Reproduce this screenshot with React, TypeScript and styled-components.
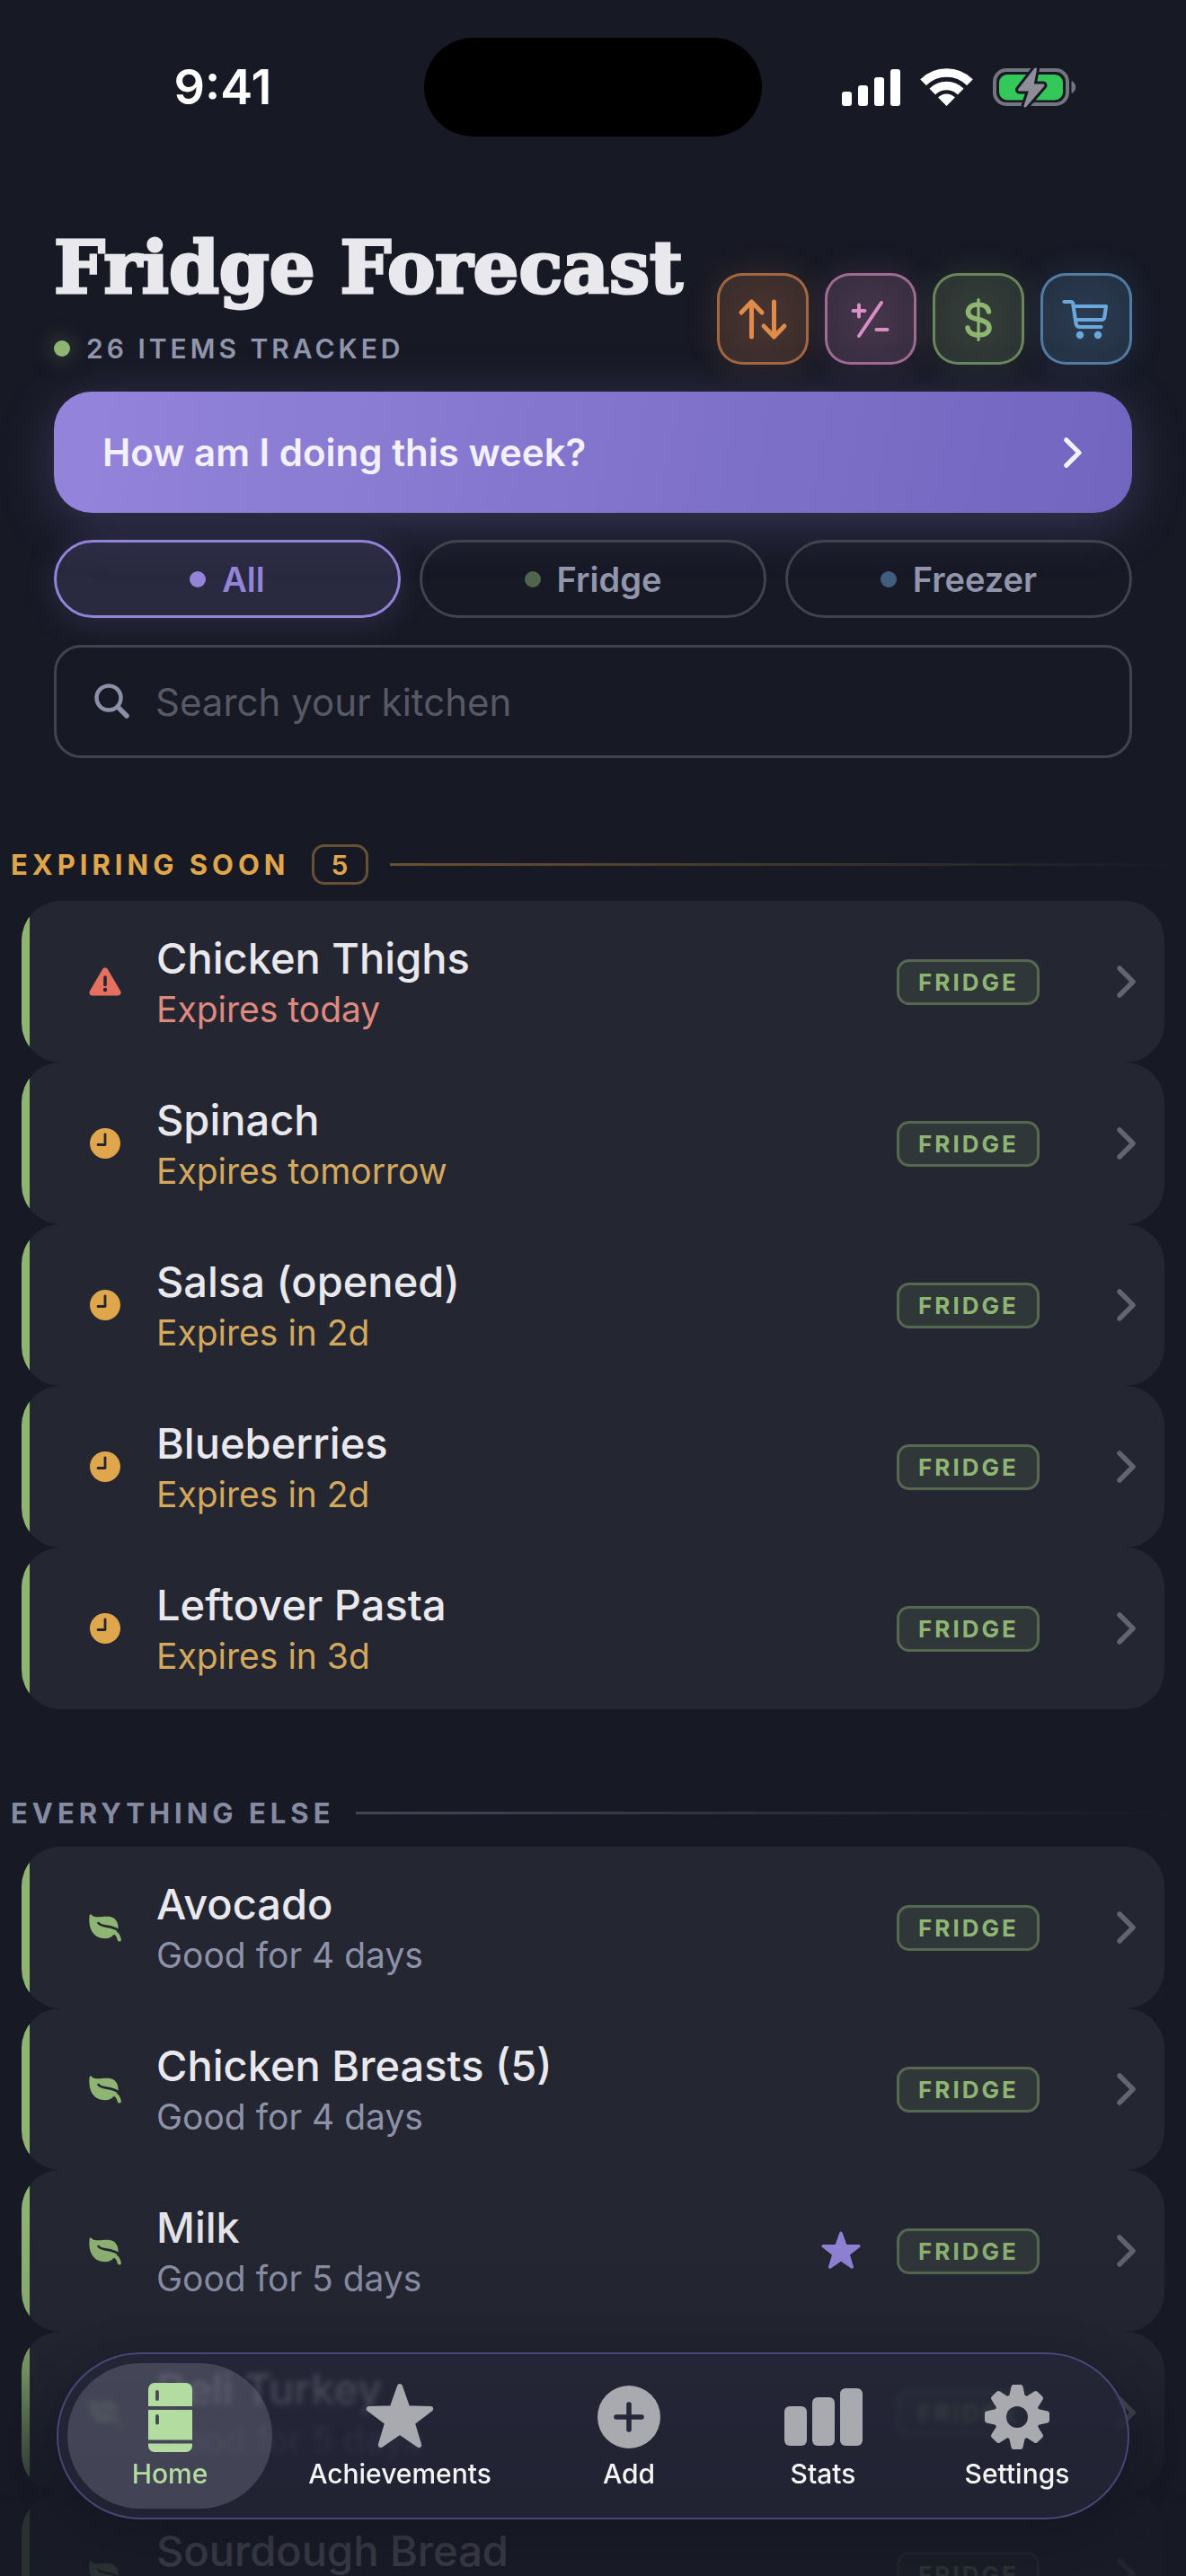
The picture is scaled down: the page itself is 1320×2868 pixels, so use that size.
import React from "react";
import styled, { createGlobalStyle } from "styled-components";

const color = {
  bg: "#171925",
  card: "#242632",
  text: "#e9e8ed",
  muted: "#9196ac",
  green: "#8fb573",
  amber: "#e0a64b",
  red: "#e5705f",
  violet: "#9384da",
};

const GlobalStyle = createGlobalStyle`
  * { box-sizing: border-box; }
  body { margin: 0; background: ${color.bg}; }
  button, input { font: inherit; color: inherit; }
  button { cursor: pointer; padding: 0; border: 0; background: none; }
  h1, h2, p, ul { margin: 0; padding: 0; }
  ul { list-style: none; }
  svg { display: block; flex: none; overflow: visible; }
`;

const Screen = styled.div`
  position: relative;
  height: 100vh;
  overflow: hidden;
  background: ${color.bg};
  color: ${color.text};
  font-family: Inter, "Liberation Sans", sans-serif;
`;

const Scroller = styled.main`
  height: 100%;
  overflow-y: auto;
  scrollbar-width: none;
`;

const StatusBar = styled.div`
  display: grid;
  grid-template-columns: 1fr 376px 1fr;
  align-items: center;
  justify-items: center;
  height: 110px;
  margin-top: 42px;
  color: #fff;
`;

const Clock = styled.time`
  font-size: 54px;
  line-height: 64px;
  font-weight: 600;
  padding-left: 24px;
`;

const Island = styled.div`
  width: 100%;
  height: 100%;
  border-radius: 55px;
  background: #000;
`;

const StatusIcons = styled.div`
  display: flex;
  align-items: center;
  gap: 23px;
  padding-right: 34px;
`;

const Top = styled.div`
  display: flex;
  flex-direction: column;
  gap: 30px;
  padding: 98px 60px 0;
`;

const Header = styled.header`
  display: flex;
  align-items: flex-end;
  justify-content: space-between;
`;

const Title = styled.h1`
  font-family: "DejaVu Serif", serif;
  font-size: 80px;
  line-height: 96px;
  font-weight: 700;
  white-space: nowrap;
  -webkit-text-stroke: 3px ${color.text};
`;

const Tracked = styled.p`
  display: flex;
  align-items: center;
  gap: 18px;
  margin-top: 24px;
  font-size: 30px;
  line-height: 36px;
  font-weight: 600;
  letter-spacing: 4px;
  color: ${color.muted};
`;

const Dot = styled.span<{ $color: string; $glow?: boolean }>`
  width: 18px;
  height: 18px;
  border-radius: 50%;
  background: ${(p) => p.$color};
  box-shadow: ${(p) => (p.$glow ? `0 0 24px ${p.$color}80` : "none")};
`;

const Actions = styled.div`
  display: flex;
  gap: 18px;
`;

const ActionButton = styled.button<{ $color: string }>`
  display: grid;
  place-items: center;
  width: 102px;
  height: 102px;
  border: 3px solid ${(p) => p.$color}a0;
  border-radius: 28px;
  color: ${(p) => p.$color};
  background: radial-gradient(circle, ${(p) => p.$color}40, ${(p) => p.$color}30 70%);
  box-shadow: 0 0 36px ${(p) => p.$color}26;
`;

const Banner = styled.button`
  display: flex;
  align-items: center;
  justify-content: space-between;
  height: 135px;
  padding: 0 56px 0 54px;
  border-radius: 42px;
  background: linear-gradient(100deg, #9484db, #7165bf);
  box-shadow: 0 12px 60px #9384da45;
  color: #f4f1ff;
  font-size: 42px;
  font-weight: 600;
`;

const Chips = styled.div`
  display: grid;
  grid-template-columns: repeat(3, 1fr);
  gap: 21px;
`;

const Chip = styled.button<{ $active?: boolean }>`
  display: flex;
  align-items: center;
  justify-content: center;
  gap: 18px;
  height: 87px;
  border: 3px solid ${(p) => (p.$active ? color.violet : "#42434f")};
  border-radius: 44px;
  background: ${(p) => (p.$active ? "#9384da26" : "transparent")};
  box-shadow: ${(p) => (p.$active ? "0 6px 36px #9384da2e" : "none")};
  color: ${(p) => (p.$active ? color.violet : color.muted)};
  font-size: 38px;
  font-weight: 600;
`;

const SearchBox = styled.label`
  display: flex;
  align-items: center;
  gap: 28px;
  height: 126px;
  padding: 0 42px;
  border: 3px solid #42434f;
  border-radius: 30px;
  color: ${color.muted};
`;

const SearchInput = styled.input`
  flex: 1;
  min-width: 0;
  padding: 0;
  border: 0;
  outline: 0;
  background: transparent;
  font-size: 42px;
  &::placeholder { color: #575965; opacity: 1; }
`;

const Section = styled.section`
  margin-top: 96px;
`;

const SectionHead = styled.div<{ $color: string; $line: string }>`
  display: flex;
  align-items: center;
  gap: 24px;
  padding: 0 12px;
  margin-bottom: 18px;
  color: ${(p) => p.$color};
  &::after {
    content: "";
    flex: 1;
    height: 3px;
    background: linear-gradient(90deg, ${(p) => p.$line}, transparent);
  }
`;

const SectionTitle = styled.h2`
  font-size: 31px;
  line-height: 39px;
  font-weight: 700;
  letter-spacing: 5px;
`;

const Count = styled.span`
  display: grid;
  place-items: center;
  width: 63px;
  height: 45px;
  border: 3px solid #e0a64b66;
  border-radius: 14px;
  font-size: 30px;
  font-weight: 600;
`;

const List = styled.ul`
  padding: 0 24px;
`;

const Row = styled.li`
  display: flex;
  align-items: center;
  height: 180px;
  padding: 0 31px 0 66px;
  border-radius: 44px;
  background: linear-gradient(90deg, ${color.green} 9px, ${color.card} 9px);
`;

const RowIcon = styled.span`
  display: grid;
  place-items: center;
  width: 54px;
`;

const RowText = styled.div`
  flex: 1;
  min-width: 0;
  padding-left: 30px;
`;

const Name = styled.p`
  font-size: 47px;
  line-height: 58px;
  font-weight: 500;
`;

const Detail = styled.p<{ $color: string }>`
  font-size: 39px;
  line-height: 48px;
  margin-top: 4px;
  color: ${(p) => p.$color};
`;

const Tag = styled.span`
  display: grid;
  place-items: center;
  width: 159px;
  height: 51px;
  margin: 0 86px 0 40px;
  border: 3px solid #8fb57366;
  border-radius: 14px;
  background: #8fb5731f;
  color: ${color.green};
  font-size: 26px;
  font-weight: 700;
  letter-spacing: 3px;
`;

const Fade = styled.div`
  position: absolute;
  inset: auto 0 0;
  height: 430px;
  pointer-events: none;
  background: linear-gradient(
    #16182400,
    #16182414 30%,
    #16182438 45%,
    #16182490 63%,
    #161824d8 80%,
    #171925d8
  );
`;

const TabBar = styled.nav`
  position: absolute;
  inset: auto 63px 63px;
  display: grid;
  grid-template-columns: 228fr 284fr 226fr 206fr 226fr;
  height: 186px;
  padding: 10px;
  border: 2px solid #454874;
  border-radius: 93px;
  background: #262739b8;
  backdrop-filter: blur(3px);
  box-shadow: 0 12px 48px #10121c66;
`;

const Tab = styled.button<{ $active?: boolean }>`
  display: flex;
  flex-direction: column;
  align-items: center;
  border-radius: 81px;
  padding-top: 21px;
  color: ${(p) => (p.$active ? "#b3dca0" : "#f4f4f5")};
  background: ${(p) => (p.$active ? "#85889a55" : "none")};
  font-size: 30px;
  line-height: 36px;
  font-weight: 500;
`;

const TabIcon = styled.span`
  display: grid;
  place-items: center;
  height: 78px;
  margin-bottom: 6px;
`;

const Chevron = ({ stroke, size = 36 }: { stroke: string; size?: number }) => (
  <svg width={size * 0.6} height={size} viewBox="0 0 21.6 36" fill="none" stroke={stroke} strokeWidth="5.5" strokeLinecap="round" strokeLinejoin="round">
    <path d="M3 3 L18 18 L3 33" />
  </svg>
);

const Signal = () => (
  <svg width="65" height="41" fill="#fff">
    <rect x="0" y="25" width="11" height="16" rx="3" />
    <rect x="18" y="18" width="11" height="23" rx="3" />
    <rect x="36" y="9" width="11" height="32" rx="3" />
    <rect x="54" y="0" width="11" height="41" rx="3" />
  </svg>
);

const Wifi = () => (
  <svg width="57" height="42" viewBox="0 0 57 42" fill="none" stroke="#fff" strokeWidth="9.5">
    <clipPath id="wedge"><path d="M28.5 42 L-13 0 H70 Z" /></clipPath>
    <g clipPath="url(#wedge)">
      <circle cx="28.5" cy="41.5" r="36.5" />
      <circle cx="28.5" cy="41.5" r="22" />
      <circle cx="28.5" cy="41.5" r="6.5" strokeWidth="13" />
    </g>
  </svg>
);

const bolt = "M47.5 2 L29.5 25 H42 L36 43 L56 20 H44 Z";
const Battery = () => (
  <svg width="93" height="44" viewBox="0 0 93 44">
    <rect x="2" y="3" width="81" height="38" rx="13" fill="none" stroke="#74757f" strokeWidth="4" />
    <path d="M88 15.5 a7.5 7.5 0 0 1 0 13 Z" fill="#74757f" stroke="#74757f" />
    <rect x="7" y="8" width="71" height="28.5" rx="9" fill="#34c759" />
    <path d={bolt} fill={color.bg} stroke={color.bg} strokeWidth="9" strokeLinejoin="round" />
    <path d={bolt} fill="#8d8e97" stroke="#8d8e97" strokeWidth="3" strokeLinejoin="round" />
  </svg>
);

const ActionIcon = ({ width, children }: { width: number; children: React.ReactNode }) => (
  <svg width="60" height="60" viewBox="-30 -30 60 60" fill="none" stroke="currentColor" strokeWidth={width} strokeLinecap="round" strokeLinejoin="round">
    {children}
  </svg>
);

const SortIcon = () => (
  <ActionIcon width={5}>
    <path d="M-12.5 20 V-19 M-24 -7 L-12.5 -19 L-1 -7 M12.5 -19 V20 M1 8 L12.5 20 L24 8" />
  </ActionIcon>
);
const PlusMinusIcon = () => (
  <ActionIcon width={4}>
    <path d="M12 -18 L-13 19 M-19.5 -9 H-6.5 M-13 -15.5 V-2.5 M6.5 12 H18.5" />
  </ActionIcon>
);
const DollarIcon = () => (
  <ActionIcon width={5.5}>
    <path d="M11.5 -8 C10.5 -13 6 -16 0 -16 C-7 -16 -11.5 -13 -11.5 -7.5 C-11.5 -2 -6 -0.5 0 0.8 C7 2.3 12 4.5 12 10 C12 15.5 7 18 0 18 C-7 18 -11.5 14.5 -12 10" />
    <path d="M0 -21.5 V23.5" strokeWidth="3.2" />
  </ActionIcon>
);
const CartIcon = () => (
  <ActionIcon width={4.2}>
    <path d="M-24.5 -19 H-17 C-15.5 -19 -15 -18 -14.8 -17 L-11.5 5 C-11 8 -10 9 -7.5 9 H16.5 M-14 -14 H22 L20.3 -2 C20 0 19 1 17 1 H-12" />
    <g fill="currentColor" stroke="none">
      <circle cx="-7" cy="18" r="4.2" />
      <circle cx="13" cy="18" r="4.2" />
    </g>
  </ActionIcon>
);

const SearchIcon = () => (
  <svg width="40" height="40" viewBox="0 0 40 40" fill="none" stroke="#8b90a6" strokeLinecap="round">
    <circle cx="16" cy="16" r="13.5" strokeWidth="4.5" />
    <path d="M26.5 26.5 L36 36" strokeWidth="5.5" />
  </svg>
);

const AlertIcon = () => (
  <svg width="36" height="32" viewBox="0 0 36 32">
    <path d="M18 4 L32 28 H4 Z" fill={color.red} stroke={color.red} strokeWidth="7" strokeLinejoin="round" />
    <path d="M18 11 V19.5" stroke={color.card} strokeWidth="3.6" strokeLinecap="round" />
    <circle cx="18" cy="25" r="2.2" fill={color.card} />
  </svg>
);

const ClockIcon = () => (
  <svg width="34" height="34" viewBox="-17 -17 34 34">
    <circle r="17" fill={color.amber} />
    <path d="M0 -10 V1.5 H-8" fill="none" stroke={color.card} strokeWidth="2.8" strokeLinecap="round" strokeLinejoin="round" />
  </svg>
);

const LeafIcon = () => (
  <svg width="36" height="31" viewBox="0 0 36 31" fill="none" strokeLinecap="round">
    <path d="M2 0.3 C0.8 0 0.5 1.5 0.4 4 C-0.4 18 6 27.2 18 27.2 C22 27.2 25 26 27.5 23 L32.5 18 C33.5 9 29 3.2 22 2.8 C14 2.4 8 5 3.4 1.4 C3 1 2.5 0.4 2 0.3 Z" fill={color.green} />
    <path d="M24 19.5 C30 20 33 24 33.8 28.5" stroke={color.green} strokeWidth="4.2" />
    <path d="M10.5 10 C15 15.5 24 11.5 33 18.5" stroke={color.card} strokeWidth="2.6" />
  </svg>
);

const starPoints = (outer: number, inner: number) =>
  Array.from({ length: 10 }, (_, i) => {
    const r = i % 2 ? inner : outer;
    const a = (i * Math.PI) / 5 - Math.PI / 2;
    return `${r * Math.cos(a)},${r * Math.sin(a)}`;
  }).join(" ");

const Star = ({ size, fill }: { size: number; fill: string }) => (
  <svg width={size} height={size} viewBox="-38 -38 76 76">
    <polygon points={starPoints(36, 14.5)} fill={fill} stroke={fill} strokeWidth="6" strokeLinejoin="round" transform="translate(0 2)" />
  </svg>
);

const iconGray = "#a9aab0";

const FridgeIcon = () => (
  <svg width="49" height="77" viewBox="0 0 49 77">
    <mask id="fridge">
      <rect width="49" height="77" rx="7" fill="#fff" />
      <path d="M0 28 H49 M0 65.5 H49" stroke="#000" strokeWidth="4" />
      <path d="M10 10 V18 M10 37 V44.5" stroke="#000" strokeWidth="3.8" strokeLinecap="round" />
    </mask>
    <rect width="49" height="77" fill="#b3dca0" mask="url(#fridge)" />
  </svg>
);

const AddIcon = () => (
  <svg width="70" height="70" viewBox="-35 -35 70 70">
    <circle r="35" fill={iconGray} />
    <path d="M-14 0 H14 M0 -14 V14" stroke="#26273a" strokeWidth="5.6" strokeLinecap="round" />
  </svg>
);

const StatsIcon = () => (
  <svg width="87" height="64" fill={iconGray}>
    <rect x="0" y="20" width="25" height="44" rx="6" />
    <rect x="31" y="10" width="25" height="54" rx="6" />
    <rect x="62" y="0" width="25" height="64" rx="6" />
  </svg>
);

const GearIcon = () => (
  <svg width="72" height="72" viewBox="-36 -36 72 72">
    <mask id="gear">
      <g fill="#fff" stroke="#fff" strokeWidth="5" strokeLinejoin="round">
        <circle r="23" />
        {Array.from({ length: 8 }, (_, i) => (
          <path key={i} d="M-7 -20 L-4 -33.5 H4 L7 -20 Z" transform={`rotate(${i * 45})`} />
        ))}
      </g>
      <circle r="12" fill="#000" />
    </mask>
    <rect x="-36" y="-36" width="72" height="72" fill={iconGray} mask="url(#gear)" />
  </svg>
);

type Status = "today" | "soon" | "good";
type Item = { name: string; detail: string; status: Status; starred?: boolean };

const statusColor: Record<Status, string> = { today: "#e08a7e", soon: "#d4a95c", good: "#8d92a8" };
const statusIcon: Record<Status, React.ReactNode> = {
  today: <AlertIcon />,
  soon: <ClockIcon />,
  good: <LeafIcon />,
};

const expiring: Item[] = [
  { name: "Chicken Thighs", detail: "Expires today", status: "today" },
  { name: "Spinach", detail: "Expires tomorrow", status: "soon" },
  { name: "Salsa (opened)", detail: "Expires in 2d", status: "soon" },
  { name: "Blueberries", detail: "Expires in 2d", status: "soon" },
  { name: "Leftover Pasta", detail: "Expires in 3d", status: "soon" },
];

const others: Item[] = [
  { name: "Avocado", detail: "Good for 4 days", status: "good" },
  { name: "Chicken Breasts (5)", detail: "Good for 4 days", status: "good" },
  { name: "Milk", detail: "Good for 5 days", status: "good", starred: true },
  { name: "Deli Turkey", detail: "Good for 5 days", status: "good" },
  { name: "Sourdough Bread", detail: "Good for 5 days", status: "good" },
];

const ItemList = ({ items }: { items: Item[] }) => (
  <List>
    {items.map((item) => (
      <Row key={item.name}>
        <RowIcon>{statusIcon[item.status]}</RowIcon>
        <RowText>
          <Name>{item.name}</Name>
          <Detail $color={statusColor[item.status]}>{item.detail}</Detail>
        </RowText>
        {item.starred && <Star size={44} fill={color.violet} />}
        <Tag>FRIDGE</Tag>
        <Chevron stroke="#636470" />
      </Row>
    ))}
  </List>
);

const tabs = [
  { label: "Home", icon: <FridgeIcon /> },
  { label: "Achievements", icon: <Star size={76} fill={iconGray} /> },
  { label: "Add", icon: <AddIcon /> },
  { label: "Stats", icon: <StatsIcon /> },
  { label: "Settings", icon: <GearIcon /> },
];

export default function App() {
  return (
    <Screen>
      <GlobalStyle />
      <Scroller>
        <StatusBar>
          <Clock>9:41</Clock>
          <Island />
          <StatusIcons>
            <Signal />
            <Wifi />
            <Battery />
          </StatusIcons>
        </StatusBar>

        <Top>
          <Header>
            <div>
              <Title>Fridge Forecast</Title>
              <Tracked>
                <Dot $color={color.green} $glow />
                26 ITEMS TRACKED
              </Tracked>
            </div>
            <Actions>
              <ActionButton $color="#e08a4c" aria-label="Sort"><SortIcon /></ActionButton>
              <ActionButton $color="#d98fc4" aria-label="Adjust quantities"><PlusMinusIcon /></ActionButton>
              <ActionButton $color="#8fb573" aria-label="Spending"><DollarIcon /></ActionButton>
              <ActionButton $color="#6aa7db" aria-label="Shopping list"><CartIcon /></ActionButton>
            </Actions>
          </Header>

          <Banner>
            How am I doing this week?
            <Chevron stroke="#f4f1ff" size={34} />
          </Banner>

          <Chips>
            <Chip $active><Dot $color={color.violet} />All</Chip>
            <Chip><Dot $color="#50654b" />Fridge</Chip>
            <Chip><Dot $color="#405f80" />Freezer</Chip>
          </Chips>

          <SearchBox>
            <SearchIcon />
            <SearchInput type="text" placeholder="Search your kitchen" aria-label="Search your kitchen" />
          </SearchBox>
        </Top>

        <Section>
          <SectionHead $color={color.amber} $line="#e0a64b66">
            <SectionTitle>EXPIRING SOON</SectionTitle>
            <Count>5</Count>
          </SectionHead>
          <ItemList items={expiring} />
        </Section>

        <Section>
          <SectionHead $color="#868ba1" $line="#868ba166">
            <SectionTitle>EVERYTHING ELSE</SectionTitle>
          </SectionHead>
          <ItemList items={others} />
        </Section>
      </Scroller>

      <Fade />
      <TabBar>
        {tabs.map((tab, i) => (
          <Tab key={tab.label} $active={i === 0}>
            <TabIcon>{tab.icon}</TabIcon>
            {tab.label}
          </Tab>
        ))}
      </TabBar>
    </Screen>
  );
}
